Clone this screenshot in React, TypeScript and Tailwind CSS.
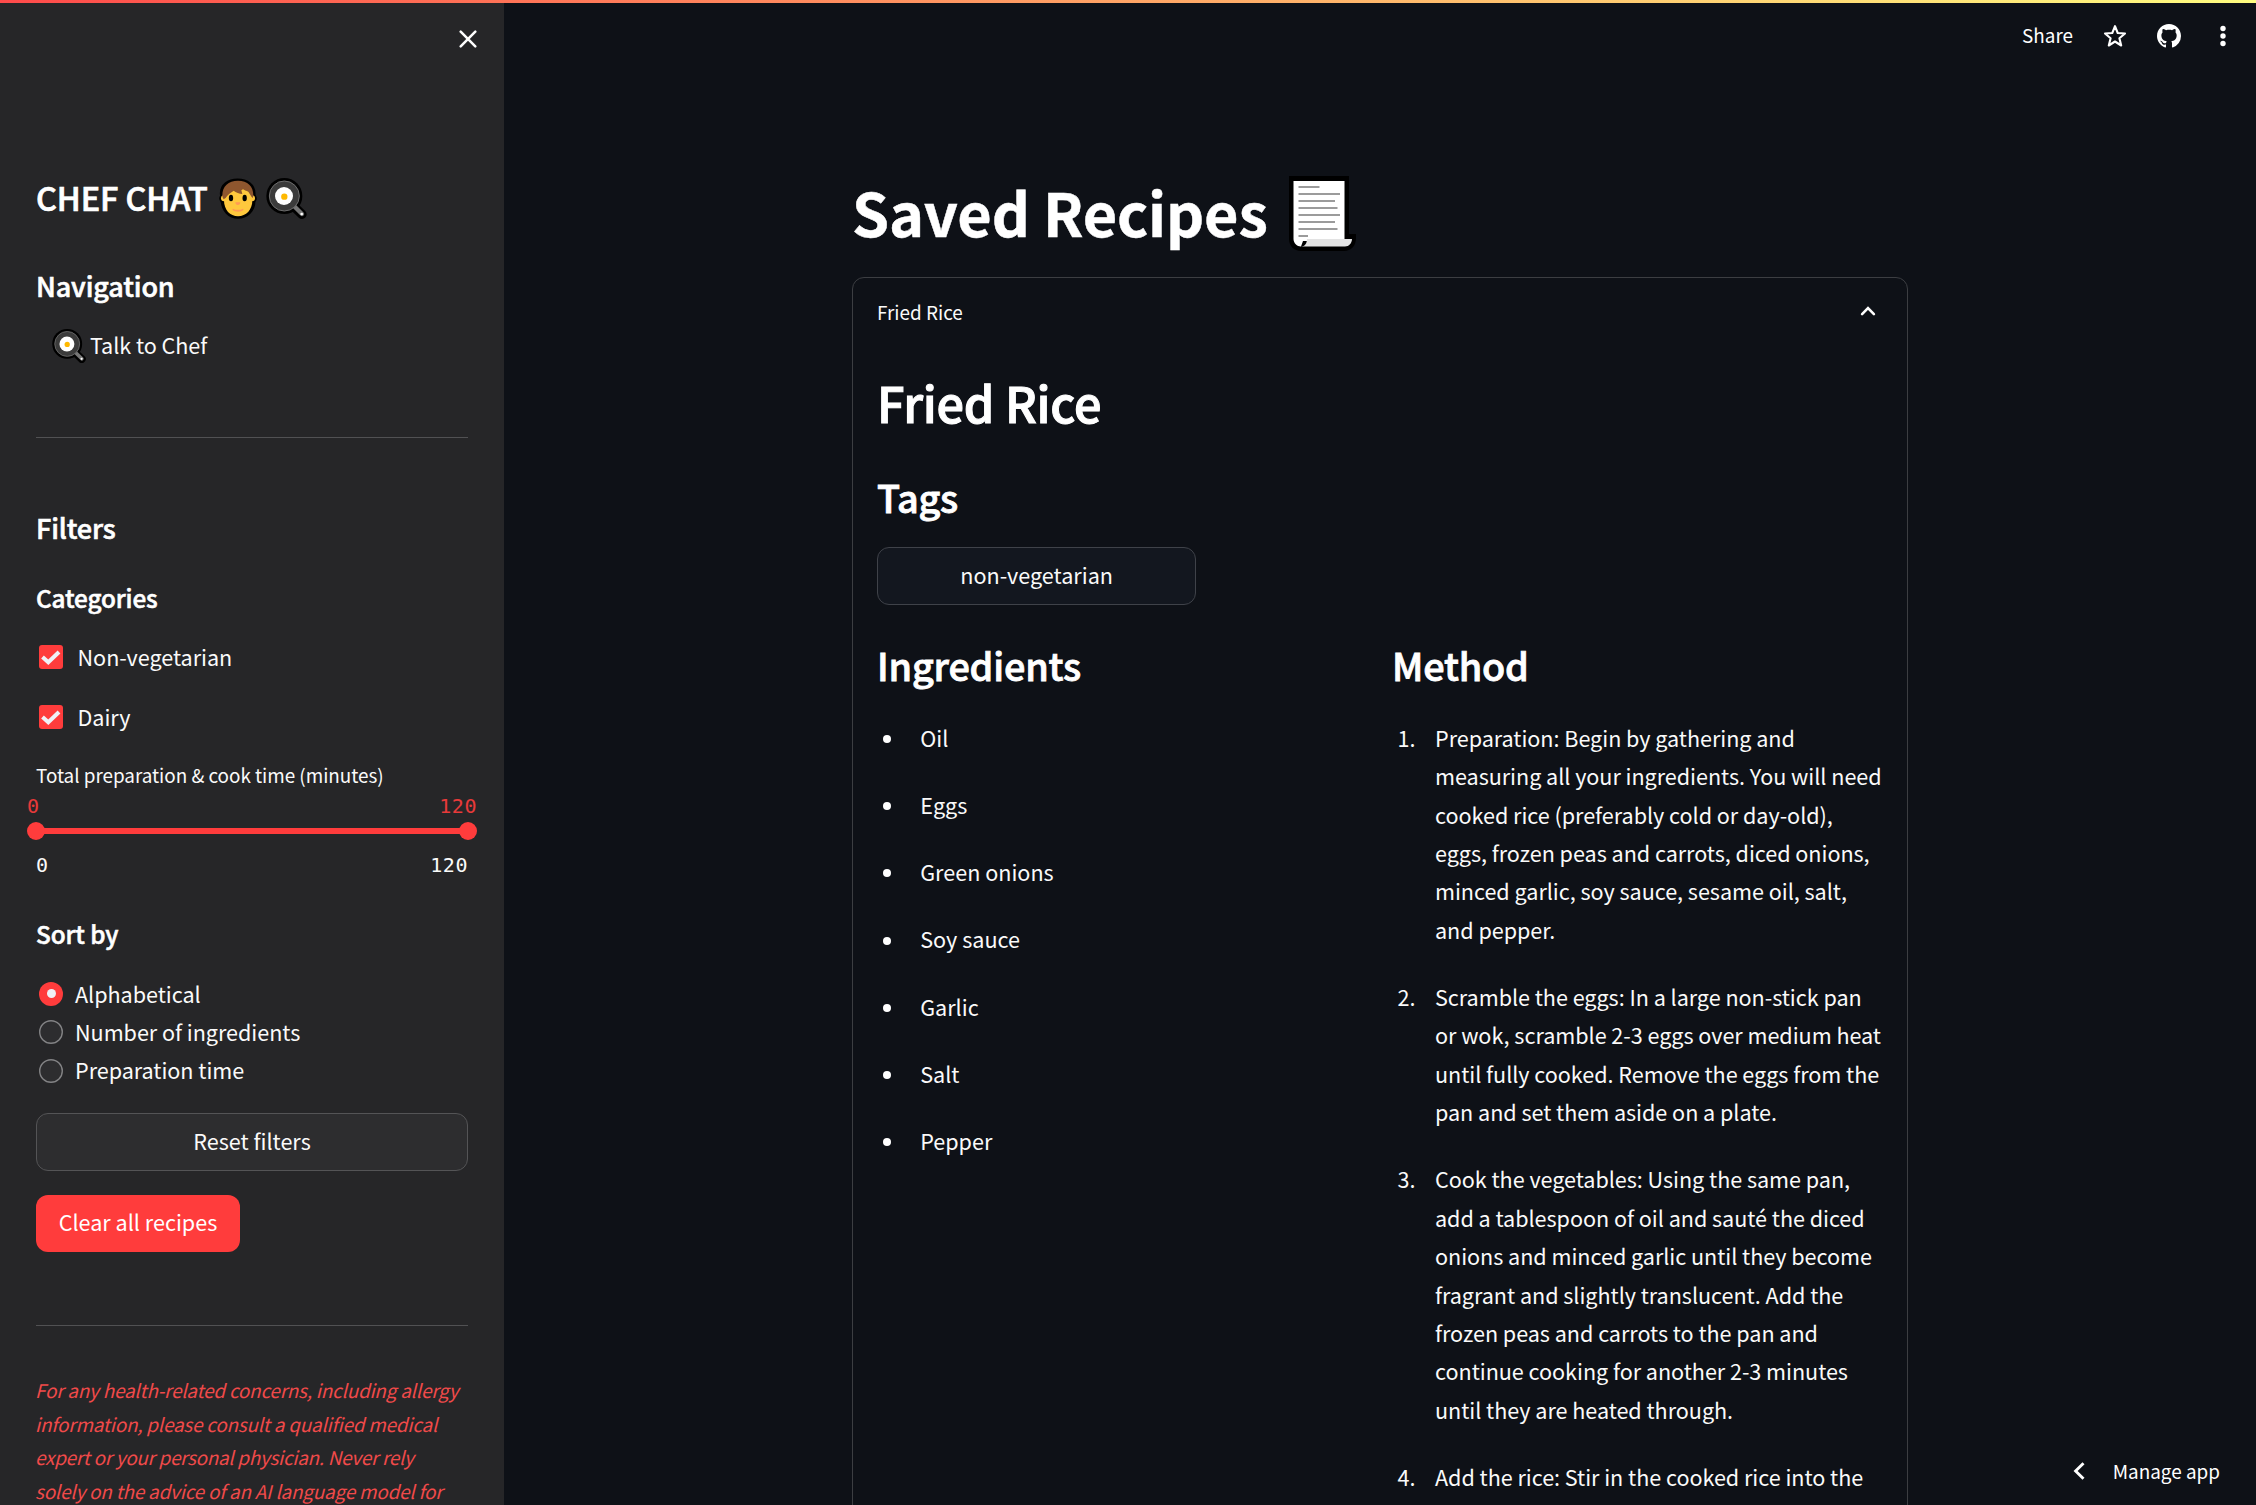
import type { ReactNode } from 'react';

function PanIcon({ className }: { className: string }) {
  return (
    <svg viewBox="0 0 123 123" className={className} fill="none">
      <circle cx="55" cy="54" r="54" fill="#000" />
      <path d="M84 86 108 109" stroke="#000" strokeWidth="28" strokeLinecap="round" />
      <path d="M84 84 108 108" stroke="#767676" strokeWidth="13" strokeLinecap="round" />
      <circle cx="55" cy="54" r="45" fill="#3b3b3b" stroke="#6e6e6e" strokeWidth="3" />
      <circle cx="54" cy="54" r="27" fill="#fff" />
      <circle cx="55" cy="56" r="9.5" fill="#ffb900" />
      <circle cx="107" cy="108" r="4" fill="#fff" />
    </svg>
  );
}

function FaceIcon({ className }: { className: string }) {
  return (
    <svg viewBox="0 0 114 123" className={className} fill="none">
      <g fill="#000" stroke="#000" strokeWidth="15" strokeLinejoin="round">
        <path d="M10 46C10 24 28 9 56 9s46 15 46 37v22c0 28-20 47-45 47S15 96 12 68z" />
        <circle cx="14" cy="61" r="6" />
        <circle cx="100" cy="61" r="6" />
      </g>
      <circle cx="15" cy="61" r="9" fill="#ffc83d" />
      <circle cx="99" cy="61" r="9" fill="#ffc83d" />
      <path d="M15 46C15 26 32 14 57 14s43 14 43 33v20c0 29-19 48-43 48S15 96 15 67z" fill="#ffc83d" />
      <path d="M10 52C10 25 28 8 57 8s46 17 46 44c0 4-1 6-2 8-6-6-9-14-13-19-6-2-13-5-16-7l-5 3 3 11c-8-1-20-4-26-10-8 6-18 11-24 22l-6 4c-3-4-4-8-4-12z" fill="#8e562e" />
      <ellipse cx="36" cy="60" rx="6.5" ry="10" fill="#000" />
      <ellipse cx="77" cy="60" rx="6.5" ry="10" fill="#000" />
      <path d="M49 73h15c0 5-3 8-7.500 8S49 78 49 73z" fill="#ff9a55" />
      <path d="M42 92c5 3 9 3 15 3s10 0 15-3c3 0 2 9-15 9s-18-9-15-9z" fill="#ff9a55" />
    </svg>
  );
}

function ScrollIcon({ className }: { className: string }) {
  const lines = [21, 41.500, 36.500, 39, 41.500, 36.500, 39, 9.500];
  return (
    <svg viewBox="0 0 68 75" className={className}>
      <path d="M0 0h60v58h7v4c0 8-5 13-12 13H12C5 75 0 70 0 63z" fill="#000" />
      <path d="M4.500 5h51v60H14l-2 5.500c-4 0-7.500-3.500-7.500-7.500z" fill="#fff" />
      <path d="M18 63h45c0 4-3 7.500-7 7.500H12c4 0 6-3.500 6-7.500z" fill="#e3e3e3" />
      {lines.map((w, i) => (
        <rect key={i} x="9.500" y={10 + i * 7} width={w} height="2" fill="#9b9b9b" />
      ))}
    </svg>
  );
}

function CheckRow({ label }: { label: string }) {
  return (
    <div className="flex h-[38px] items-center pl-[3px] text-[21.6px] leading-[38px]">
      <span className="flex size-6 items-center justify-center rounded-[3px] bg-[#ff3c3c]">
        <svg viewBox="0 0 24 24" className="size-6" fill="none">
          <path d="M3.500 12 9.300 17.300 20 7" stroke="#eff1f7" strokeWidth="4" />
        </svg>
      </span>
      <span className="ml-[14.5px] tracking-[-0.03px]">{label}</span>
    </div>
  );
}

function RadioRow({ label, on }: { label: string; on?: boolean }) {
  return (
    <div className="flex h-[38.4px] items-center pl-[3px] text-[21.6px] leading-[38.4px]">
      {on ? (
        <span className="flex size-6 items-center justify-center rounded-full bg-[#ff3c3c]">
          <span className="size-[9px] rounded-full bg-[#f0f1f6]" />
        </span>
      ) : (
        <svg viewBox="0 0 24 24" className="size-6">
          <circle cx="12" cy="12" r="11.300" fill="#2d2d2f" stroke="#838385" strokeWidth="1.400" />
        </svg>
      )}
      <span className="ml-3 tracking-[-0.04px]">{label}</span>
    </div>
  );
}

function Heading({ className, children }: { className: string; children: ReactNode }) {
  return (
    <h2 className={`h-[46px] text-[37.8px] leading-[46px] font-medium tracking-[-0.005em] text-white [-webkit-text-stroke:0.022em_white] ${className}`}>
      {children}
    </h2>
  );
}

const ingredients = ['Oil', 'Eggs', 'Green onions', 'Soy sauce', 'Garlic', 'Salt', 'Pepper'];

const steps = [
  'Preparation: Begin by gathering and measuring all your ingredients. You will need cooked rice (preferably cold or day-old), eggs, frozen peas and carrots, diced onions, minced garlic, soy sauce, sesame oil, salt, and pepper.',
  'Scramble the eggs: In a large non-stick pan or wok, scramble 2-3 eggs over medium heat until fully cooked. Remove the eggs from the pan and set them aside on a plate.',
  'Cook the vegetables: Using the same pan, add a tablespoon of oil and sauté the diced onions and minced garlic until they become fragrant and slightly translucent. Add the frozen peas and carrots to the pan and continue cooking for another 2-3 minutes until they are heated through.',
  'Add the rice: Stir in the cooked rice into the',
];

function Sidebar() {
  return (
    <aside className="h-full w-[504px] shrink-0 overflow-hidden bg-[#262628] px-9">
      <div className="flex h-[174.6px] justify-end pt-[30px]">
        <svg viewBox="0 0 18 18" className="-mr-[9px] size-[18px]" fill="none" stroke="#fff" strokeWidth="2.5" strokeLinecap="round">
          <path d="M1.700 1.700 16.300 16.300M16.300 1.700 1.700 16.300" />
        </svg>
      </div>
      <h1 className="flex h-11 items-start text-[32.4px] leading-[44px] font-medium whitespace-nowrap text-white">
        <span className="w-[183.4px] tracking-[-0.003em] [-webkit-text-stroke:0.022em_white]">CHEF CHAT</span>
        <FaceIcon className="mt-[3px] h-[41px] w-[38px]" />
        <PanIcon className="mt-[3.2px] ml-[8.6px] size-[41px]" />
      </h1>
      <h2 className="mt-[49.3px] h-9 text-[27px] leading-9 font-medium tracking-[-0.005em] text-white [-webkit-text-stroke:0.022em_white]">Navigation</h2>
      <div className="mt-[21.7px] flex h-[38px] items-start pl-[15.7px] text-[21.6px] leading-[38px]">
        <PanIcon className="mt-[3.7px] size-[34px]" />
        <span className="ml-[4.300px] tracking-[-0.05px]">Talk to Chef</span>
      </div>
      <div className="mt-[73.4px] h-px bg-[#515153]" />
      <h2 className="mt-[72.5px] h-9 text-[27px] leading-9 font-medium tracking-[-0.005em] text-white [-webkit-text-stroke:0.022em_white]">Filters</h2>
      <h3 className="mt-[35.9px] mb-[23.6px] h-8 text-[24.3px] leading-8 font-medium tracking-[-0.005em] text-white [-webkit-text-stroke:0.022em_white]">Categories</h3>
      <div className="flex flex-col gap-[22px]">
        <CheckRow label="Non-vegetarian" />
        <CheckRow label="Dairy" />
      </div>
      <p className="mt-6 h-[30px] text-[18.9px] leading-[30px] tracking-[-0.03px]">Total preparation &amp; cook time (minutes)</p>
      <div className="-mx-[9px] mt-[4px] flex h-6 justify-between font-['DejaVu_Sans_Mono',monospace] text-[20px] leading-6 tracking-[0.56px] text-[#e83a3a]">
        <span>0</span>
        <span>120</span>
      </div>
      <div className="-mx-[9px] mt-[4px] flex h-[18px] items-center">
        <span className="size-[18px] rounded-full bg-[#ff3c3c]" />
        <span className="-mx-px h-1.5 flex-1 bg-[#ff3c3c]" />
        <span className="size-[18px] rounded-full bg-[#ff3c3c]" />
      </div>
      <div className="mt-[13.1px] flex h-6 justify-between font-['DejaVu_Sans_Mono',monospace] text-[20px] leading-6 tracking-[0.56px]">
        <span>0</span>
        <span>120</span>
      </div>
      <h3 className="mt-[41.3px] mb-[24.3px] h-8 text-[24.3px] leading-8 font-medium tracking-[-0.005em] text-white [-webkit-text-stroke:0.022em_white]">Sort by</h3>
      <RadioRow label="Alphabetical" on />
      <RadioRow label="Number of ingredients" />
      <RadioRow label="Preparation time" />
      <button className="mt-[23.1px] flex h-[58px] w-full items-center justify-center rounded-xl border border-[#545456] bg-[#2d2d2f] pb-[2px] text-[21.6px]">
        Reset filters
      </button>
      <button className="mt-6 flex h-[57px] w-[204px] items-center justify-center rounded-xl bg-[#ff3c3c] pb-[3px] text-[21.6px] text-white">
        Clear all recipes
      </button>
      <div className="mt-[73px] h-px bg-[#515153]" />
      <p className="mt-[47px] -ml-px text-[18.9px] leading-[33.6px] tracking-[-0.21px] whitespace-nowrap text-[#f04a4a] italic">
        For any health-related concerns, including allergy
        <br />
        information, please consult a qualified medical
        <br />
        <span className="tracking-[-0.29px]">expert or your personal physician. Never rely</span>
        <br />
        solely on the advice of an AI language model for
      </p>
    </aside>
  );
}

function Toolbar() {
  return (
    <header className="flex h-[72px] shrink-0 items-center justify-end pr-[21px] text-[18.9px] text-white">
      <span className="mt-[-2px] leading-[30px]">Share</span>
      <svg viewBox="0 0 24 24" className="ml-[30px] size-6" fill="none" stroke="#fff" strokeWidth="2.100" strokeLinejoin="round">
        <path d="M12 2.200 14.700 9 22 9.500 16.400 14.200 18.200 21.500 12 17.500 5.800 21.500 7.600 14.200 2 9.500 9.300 9z" />
      </svg>
      <svg viewBox="0 0 16 16" className="ml-[30px] size-6" fill="#fff">
        <path d="M8 0C3.580 0 0 3.580 0 8c0 3.540 2.290 6.530 5.470 7.590.4.070.55-.17.55-.38 0-.19-.01-.82-.01-1.490-2.010.37-2.530-.49-2.690-.94-.09-.23-.48-.94-.82-1.130-.28-.15-.68-.52-.01-.53.63-.01 1.080.58 1.230.82.72 1.210 1.870.87 2.330.66.07-.52.28-.87.51-1.070-1.780-.2-3.640-.89-3.640-3.950 0-.87.31-1.590.82-2.150-.08-.2-.36-1.020.08-2.120 0 0 .67-.21 2.200.82.64-.18 1.320-.27 2-.27s1.360.09 2 .27c1.530-1.040 2.200-.82 2.200-.82.44 1.100.16 1.920.08 2.120.51.56.82 1.270.82 2.150 0 3.070-1.870 3.750-3.650 3.950.29.25.54.73.54 1.480 0 1.070-.01 1.930-.01 2.200 0 .21.15.46.55.38A8.010 8.010 0 0 0 16 8c0-4.420-3.580-8-8-8z" />
      </svg>
      <svg viewBox="0 0 24 24" className="ml-[30px] size-6" fill="#fff">
        <circle cx="12" cy="4.500" r="2.700" />
        <circle cx="12" cy="12" r="2.700" />
        <circle cx="12" cy="19.500" r="2.700" />
      </svg>
    </header>
  );
}

export default function App() {
  return (
    <div className="relative flex h-[1505px] w-[2256px] overflow-hidden bg-[#0e1117] font-['Noto_Sans_CJK_SC','Noto_Sans',sans-serif] text-[#fafafa]">
      <div className="absolute inset-x-0 top-0 h-[3px] bg-[linear-gradient(90deg,#ff4b4b,#fffd80)]" />
      <Sidebar />
      <main className="flex min-w-0 flex-1 flex-col">
        <Toolbar />
        <div className="mx-auto mt-[99.4px] w-[1056px]">
          <h1 className="flex h-20 items-start text-[59.4px] leading-[80px] font-bold tracking-[-0.003em] whitespace-nowrap text-white">
            <span className="w-[436.6px] [-webkit-text-stroke:0.008em_white]">Saved Recipes</span>
            <ScrollIcon className="mt-[5px] h-[75px] w-[68px]" />
          </h1>
          <section className="mt-[25.6px] h-[1400px] rounded-xl border border-[#3c3e42] px-6 pt-[18.800px]">
            <div className="flex h-[30px] items-center justify-between text-[18.9px] leading-[30px]">
              <span>Fried Rice</span>
              <svg viewBox="0 0 16 10" className="mt-[-2px] mr-[7px] h-[10px] w-4" fill="none" stroke="#fff" strokeWidth="2.600" strokeLinecap="round">
                <path d="M2.100 8.100 8 2.200 13.900 8.100" />
              </svg>
            </div>
            <h1 className="mt-[45.7px] h-[60px] text-[48.6px] leading-[60px] font-medium tracking-[-0.005em] text-white [-webkit-text-stroke:0.022em_white]">Fried Rice</h1>
            <Heading className="mt-[41.7px]">Tags</Heading>
            <button className="mt-[26.8px] flex h-[58px] w-[319.3px] items-center justify-center rounded-xl border border-[#3f4249] bg-[#13171f] pb-px text-[21.6px]">
              non-vegetarian
            </button>
            <div className="mt-[37.2px] grid grid-cols-2 gap-6">
              <div>
                <Heading className="">Ingredients</Heading>
                <ul className="mt-[30.600px] flex flex-col gap-[28.8px] text-[21.6px] leading-[38.4px]">
                  {ingredients.map((item) => (
                    <li key={item} className="flex">
                      <span className="mt-[16.300px] mr-[29.4px] ml-[5.800px] size-2 rounded-full bg-white" />
                      {item}
                    </li>
                  ))}
                </ul>
              </div>
              <div>
                <Heading className="">Method</Heading>
                <ol className="mt-[30.600px] flex flex-col gap-[28.8px] text-[21.6px] leading-[38.4px]">
                  {steps.map((step, i) => (
                    <li key={step} className="flex">
                      <span className="w-[43px] shrink-0 pl-[5.600px]">{i + 1}.</span>
                      <span className="w-[450px] tracking-[-0.04px]">{step}</span>
                    </li>
                  ))}
                </ol>
              </div>
            </div>
          </section>
        </div>
      </main>
      <div className="absolute right-[36px] bottom-[19px] flex h-[30px] items-center text-[18.9px] leading-[30px] text-white">
        <svg viewBox="0 0 12 18" className="mr-[28px] h-[18px] w-3" fill="none" stroke="#fff" strokeWidth="2.900">
          <path d="M10.500 1.200 2.600 9 10.500 16.800" />
        </svg>
        Manage app
      </div>
    </div>
  );
}
